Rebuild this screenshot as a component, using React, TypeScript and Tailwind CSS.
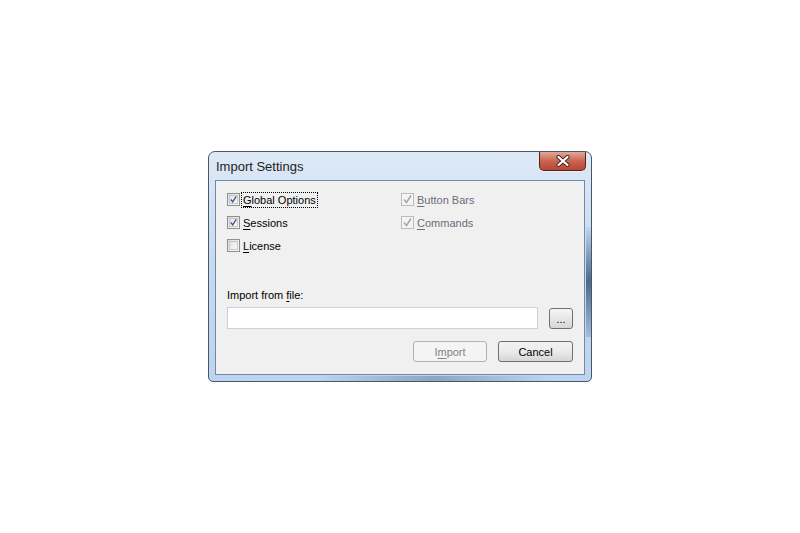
import React from "react";

const font = { fontFamily: '"Liberation Sans", Arial, sans-serif' };

function Check({ checked, disabled }: { checked: boolean; disabled?: boolean }) {
  return (
    <div
      className={
        "w-[13px] h-[13px] border flex items-center justify-center shrink-0 " +
        (disabled
          ? "border-[#bcbcbc] bg-[#f4f4f4]"
          : "border-[#8e8f8f] bg-gradient-to-br from-[#dcdcdc] to-[#fbfbfb]")
      }
    >
      <div
        className={
          "w-[9px] h-[9px] flex items-center justify-center " +
          (disabled ? "" : "border border-[#c8c8c8] bg-gradient-to-br from-[#e2e2e2] to-[#fafafa]")
        }
      >
        {checked && (
          <svg width="9" height="9" viewBox="0 0 9 9">
            <path
              d="M1 4.5 L3.5 7.5 L8 0.5"
              fill="none"
              stroke={disabled ? "#a8a8a8" : "#3a4f8c"}
              strokeWidth="1.6"
            />
          </svg>
        )}
      </div>
    </div>
  );
}

function CheckRow({
  checked,
  disabled,
  u,
  post,
  focus,
}: {
  checked: boolean;
  disabled?: boolean;
  u: string;
  post: string;
  focus?: boolean;
}) {
  return (
    <div className="h-[23px] flex items-center">
      <Check checked={checked} disabled={disabled} />
      <span
        className={
          "ml-[1px] leading-[14px] px-[1px] border " +
          (focus ? "border-dotted border-black" : "border-transparent") +
          (disabled ? " text-[#6b6d78]" : " text-black")
        }
      >
        <span className="underline underline-offset-2">{u}</span>
        {post}
      </span>
    </div>
  );
}

export default function App() {
  return (
    <div className="w-[800px] h-[533px] bg-white pt-[151px] pl-[208px] text-[11px]" style={font}>
      <div className="w-[384px] h-[231px] rounded-t-[7px] rounded-b-[5px] border border-[#4a5565] bg-gradient-to-b from-[#dde9f6] via-[#c6daf0] to-[#bcd4ee] flex flex-col relative overflow-hidden">
        {/* glass streaks */}
        <div className="absolute right-0 top-[75px] w-[5px] h-[110px] bg-gradient-to-b from-[#bcd4ee] via-[#2f4f73] to-[#9bb7d4] opacity-80" />
        <div className="absolute left-[110px] bottom-0 w-[230px] h-[5px] bg-gradient-to-r from-[#bcd4ee] via-[#6a86a6] to-[#bcd4ee] opacity-60" />
        <div className="h-[28px] flex items-start justify-between relative">
          <span className="ml-[7px] mt-[5px] text-[13px] text-[#1e1e1e]">Import Settings</span>
          <div className="mr-[5px] w-[47px] h-[19px] rounded-b-[5px] border border-t-0 border-[#5d1f17] bg-gradient-to-b from-[#e0a89a] via-[#c8644f] to-[#b8473a] flex items-center justify-center shadow-[0_1px_0_#e8f0f8]">
            <svg width="16" height="12" viewBox="0 0 16 12">
              <path
                d="M3.5 2 L12.5 10 M12.5 2 L3.5 10"
                fill="none"
                stroke="#4a2a24"
                strokeWidth="4.2"
                strokeLinecap="round"
              />
              <path
                d="M3.5 2 L12.5 10 M12.5 2 L3.5 10"
                fill="none"
                stroke="#ffffff"
                strokeWidth="2.2"
                strokeLinecap="round"
              />
            </svg>
          </div>
        </div>
        <div className="mx-[6px] mb-[6px] flex-1 border border-[#6f8aa8] bg-[#f0f0f0] flex flex-col pt-[7px] pl-[11px] pr-[11px] relative">
          <div className="flex">
            <div className="w-[174px] flex flex-col">
              <CheckRow checked u="G" post="lobal Options" focus />
              <CheckRow checked u="S" post="essions" />
              <CheckRow checked={false} u="L" post="icense" />
            </div>
            <div className="flex flex-col">
              <CheckRow checked disabled u="B" post="utton Bars" />
              <CheckRow checked disabled u="C" post="ommands" />
            </div>
          </div>
          <div className="mt-[31px] h-[14px] leading-[14px] text-black">
            Import from <span className="underline underline-offset-2">f</span>ile:
          </div>
          <div className="mt-[5px] flex items-start">
            <div className="w-[311px] h-[22px] border border-[#c5d2e0] bg-white" />
            <button className="ml-[11px] mt-[1px] w-[24px] h-[21px] rounded-[3px] border border-[#707070] bg-gradient-to-b from-[#f6f6f6] via-[#e6e6e6] to-[#d6d6d6] text-[11px] leading-[14px] text-black">
              ...
            </button>
          </div>
          <div className="mt-[12px] flex justify-end">
            <button className="w-[74px] h-[21px] rounded-[3px] border border-[#adb2b5] bg-[#f4f4f4] text-[#838383] leading-[14px]">
              I<span className="underline underline-offset-2">m</span>port
            </button>
            <button className="ml-[11px] w-[75px] h-[21px] rounded-[3px] border border-[#707070] bg-gradient-to-b from-[#f2f2f2] via-[#ebebeb] to-[#d5d5d5] text-black leading-[14px]">
              Cancel
            </button>
          </div>
        </div>
      </div>
    </div>
  );
}
